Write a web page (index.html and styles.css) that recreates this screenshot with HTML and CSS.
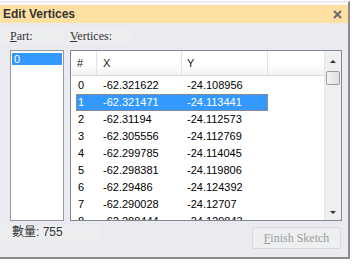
FILE: index.html
```html
<!DOCTYPE html>
<html lang="en">
<head>
  <meta charset="UTF-8" />
  <title>Edit Vertices</title>
  <link rel="stylesheet" href="styles.css">
</head>
<body>
  <div class="window">
    <div class="titlebar">
      <span class="title">Edit Vertices</span>
      <svg class="close" width="9" height="9" viewBox="0 0 9 9">
        <path d="M1 1 L8 8 M8 1 L1 8" stroke="#6b6b6b" stroke-width="2" />
      </svg>
    </div>

    <div class="content">
      <div class="labels">
        <span class="label label-part"><u>P</u>art:</span>
        <span class="label label-vertices"><u>V</u>ertices:</span>
      </div>

      <div class="panes">
        <div class="part-list">
          <div class="part-item selected">0</div>
        </div>

        <div class="table">
          <div class="grid">
            <div class="head">
              <div class="h h0">#</div>
              <div class="h h1">X</div>
              <div class="h h2">Y</div>
              <div class="h hfill"></div>
            </div>
            <div class="rows" id="rows"></div>
          </div>
          <div class="scrollbar">
            <div class="arrow up"></div>
            <div class="thumb"></div>
            <div class="track"></div>
            <div class="arrow down"></div>
          </div>
        </div>
      </div>

      <div class="footer">
        <span class="count">數量: 755</span>
        <button class="finish" disabled><u>F</u>inish Sketch</button>
      </div>
    </div>
  </div>

  <script>
    const vertices = [
      ['-62.321622', '-24.108956'],
      ['-62.321471', '-24.113441'],
      ['-62.31194', '-24.112573'],
      ['-62.305556', '-24.112769'],
      ['-62.299785', '-24.114045'],
      ['-62.298381', '-24.119806'],
      ['-62.29486', '-24.124392'],
      ['-62.290028', '-24.12707'],
      ['-62.288444', '-24.129843']
    ];

    const rows = document.getElementById('rows');
    vertices.forEach((v, i) => {
      const row = document.createElement('div');
      row.className = i === 1 ? 'row selected' : 'row';
      row.innerHTML =
        `<span class="c c0">${i}</span>` +
        `<span class="c c1">${v[0]}</span>` +
        `<span class="c c2">${v[1]}</span>`;
      rows.appendChild(row);
    });
  </script>
</body>
</html>
```

FILE: styles.css
```css
body {
  margin: 0;
  background: #fff;
  font-family: 'Liberation Sans', Arial, sans-serif;
}

.window {
  width: 348px;
  margin-top: 1px;
  border-top: 1px solid #e2e2e2;
  border-right: 2px solid #8c8c8c;
  border-bottom: 2px solid #8c8c8c;
  padding-top: 3px;
  background: #f9f9f9;
}

.titlebar {
  height: 18px;
  background: #ffe0a3;
  display: flex;
  align-items: center;
  justify-content: space-between;
  padding: 0 6px 0 3px;
}

.title {
  font-weight: bold;
  font-size: 12px;
  color: #333;
}

.close {
  display: block;
}

.content {
  height: 234px;
  background: #e9ebf0;
  padding-top: 6px;
  box-sizing: border-box;
}

.labels {
  display: flex;
  height: 14px;
}

.label {
  font-family: 'Liberation Serif', serif;
  font-size: 12px;
  line-height: 14px;
  color: #333;
  background: #edeef0;
}

.label-part {
  width: 54px;
  padding-left: 10px;
}

.label-vertices {
  width: 62px;
  margin-left: 4px;
  padding-left: 2px;
}

.panes {
  display: flex;
  gap: 6px;
  margin: 7px 0 0 10px;
  height: 171px;
}

.part-list {
  width: 54px;
  box-sizing: border-box;
  border: 1px solid #9a9a9a;
  background: #fff;
  padding: 2px 1px;
}

.part-item {
  height: 12px;
  font-size: 11px;
  line-height: 12px;
  padding-left: 2px;
}

.part-item.selected {
  background: #3399ff;
  color: #fff;
}

.table {
  width: 272px;
  box-sizing: border-box;
  border: 1px solid #838790;
  background: #fff;
  display: flex;
}

.grid {
  flex: 1;
  overflow: hidden;
}

.head {
  display: flex;
  height: 24px;
  border-bottom: 1px solid #dcdcdc;
  background: linear-gradient(#fff 0%, #fff 55%, #f2f3f5 100%);
  font-size: 11px;
}

.h {
  line-height: 24px;
  border-right: 1px solid #e3e3e3;
  box-sizing: border-box;
  color: #222;
}

.h0 { width: 26px; padding-left: 6px; }
.h1 { width: 85px; padding-left: 6px; }
.h2 { width: 86px; padding-left: 5px; }
.hfill { flex: 1; border-right: none; }

.rows {
  padding-top: 1px;
}

.row {
  display: flex;
  width: 192px;
  height: 17px;
  margin-left: 5px;
  font-size: 11px;
  line-height: 17px;
  color: #000;
}

.row.selected {
  background: #3399ff;
  color: #fff;
  outline: 1px dotted #e07a2a;
  outline-offset: -1px;
}

.c0 { width: 21px; padding-left: 2px; box-sizing: border-box; }
.c1 { width: 85px; padding-left: 6px; box-sizing: border-box; }
.c2 { width: 86px; padding-left: 5px; box-sizing: border-box; }

.scrollbar {
  width: 17px;
  display: flex;
  flex-direction: column;
  align-items: center;
  background: #eeeff0;
  border-left: 1px solid #e4e4e4;
  box-sizing: border-box;
}

.arrow {
  width: 0;
  height: 0;
  border-left: 3px solid transparent;
  border-right: 3px solid transparent;
}

.arrow.up {
  margin-top: 9px;
  border-bottom: 3px solid #333;
}

.arrow.down {
  margin-bottom: 6px;
  border-top: 3px solid #333;
}

.thumb {
  width: 14px;
  height: 14px;
  margin: 8px 0 0 -1px;
  box-sizing: border-box;
  border: 1px solid #9c9c9c;
  border-radius: 2px;
  background: linear-gradient(90deg, #f4f4f4, #dedede);
}

.track {
  flex: 1;
}

.footer {
  display: flex;
  justify-content: space-between;
  align-items: flex-start;
  margin: 6px 7px 0 0;
}

.count {
  margin-top: -2px;
  width: 88px;
  padding-left: 12px;
  font-family: 'Liberation Sans', 'Noto Sans CJK TC', sans-serif;
  font-size: 12px;
  line-height: 15px;
  color: #333;
  background: #edeef0;
}

.finish {
  width: 89px;
  height: 22px;
  box-sizing: border-box;
  border: 1px solid #d8d9dc;
  border-radius: 2px;
  background: #eeeff1;
  font-family: 'Liberation Serif', serif;
  font-size: 12px;
  color: #9c9c9c;
  padding: 0;
}
```
